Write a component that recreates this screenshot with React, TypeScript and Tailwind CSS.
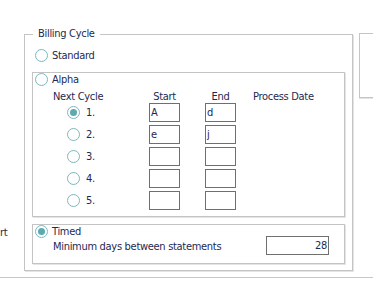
import React from 'react'

const Radio = ({ checked = false }: { checked?: boolean }) => (
  <span className="flex h-[13px] w-[13px] shrink-0 items-center justify-center rounded-full border border-[#7ab9be] bg-white">
    {checked && <span className="h-[7px] w-[7px] rounded-full bg-[#5ea9af]" />}
  </span>
)

const Field = ({ value = '', className = '' }: { value?: string; className?: string }) => (
  <div className={`h-[19px] w-[31px] border border-[#6f6f6f] bg-white pl-[1px] leading-[17px] ${className}`}>{value}</div>
)

const rows = [
  { n: '1.', start: 'A', end: 'd', checked: true },
  { n: '2.', start: 'e', end: 'j', checked: false },
  { n: '3.', start: '', end: '', checked: false },
  { n: '4.', start: '', end: '', checked: false },
  { n: '5.', start: '', end: '', checked: false },
]

export default function App() {
  return (
    <div
      className="h-[288px] w-[373px] overflow-hidden bg-white text-[11px] leading-[13px] tracking-[-0.3px] text-[#1e2950]"
      style={{ fontFamily: '"DejaVu Sans Condensed", "Liberation Sans", Arial, sans-serif' }}
    >
      <div className="flex items-start pt-[33px]">
        {/* clipped label column from the left */}
        <div className="w-[24px] shrink-0 overflow-hidden pt-[193px]">rt</div>

        {/* Billing Cycle group */}
        <div className="relative mt-[1px] h-[237px] w-[329px] shrink-0 border border-[#c4c4c4] shadow-[1px_1px_0_#e4e4e4]">
          <span className="absolute left-[8px] top-[-8px] bg-white px-[5px]">Billing Cycle</span>

          <div className="mt-[14px] flex items-center gap-[4px] pl-[10px]">
            <Radio />
            <span>Standard</span>
          </div>

          {/* Alpha box */}
          <div className="mx-[7px] mt-[10px] h-[145px] border border-[#c4c4c4] shadow-[1px_1px_0_#e4e4e4]">
            <div className="flex h-[14px] items-start gap-[4px] pl-[2px]">
              <Radio />
              <span>Alpha</span>
            </div>
            <div className="mt-[3px] flex h-[13px] items-center pl-[20px]">
              <span className="w-[96px]">Next Cycle</span>
              <span className="w-[31px] text-center">Start</span>
              <span className="ml-[25px] w-[31px] text-center">End</span>
              <span className="ml-[17px]">Process Date</span>
            </div>
            <div className="flex flex-col gap-[3px] pl-[20px]">
              {rows.map((r) => (
                <div key={r.n} className="flex h-[19px] items-center">
                  <div className="flex w-[96px] items-center gap-[6px] pl-[14px]">
                    <Radio checked={r.checked} />
                    <span>{r.n}</span>
                  </div>
                  <Field value={r.start} />
                  <Field value={r.end} className="ml-[25px]" />
                </div>
              ))}
            </div>
          </div>

          {/* Timed box */}
          <div className="mx-[7px] mt-[7px] flex h-[40px] border border-[#c4c4c4] shadow-[1px_1px_0_#e4e4e4]">
            <div className="flex-1">
              <div className="flex h-[13px] items-center gap-[4px] pl-[2px]">
                <Radio checked />
                <span>Timed</span>
              </div>
              <div className="mt-[2px] pl-[20px]">Minimum days between statements</div>
            </div>
            <div className="mr-[15px] mt-[11px] h-[19px] w-[63px] border border-[#6f6f6f] pr-[1px] text-right leading-[17px]">
              28
            </div>
          </div>
        </div>

        {/* neighbouring panel, cut off at the right */}
        <div className="ml-[6px] h-[65px] w-[20px] shrink-0 border-y border-l border-[#c4c4c4] shadow-[0_1px_0_#e4e4e4]" />
      </div>

      <div className="mt-[6px] border-t border-[#c8c8c8]" />
    </div>
  )
}
